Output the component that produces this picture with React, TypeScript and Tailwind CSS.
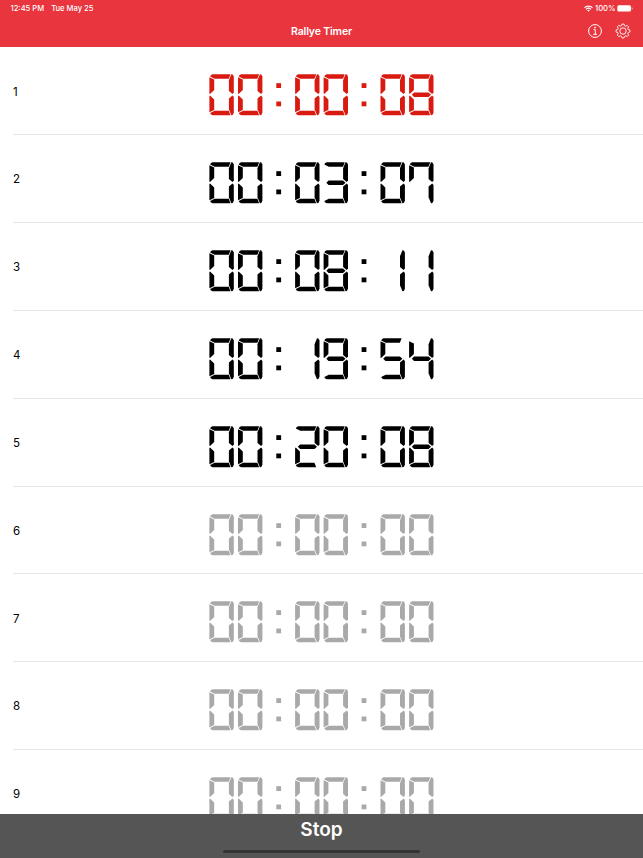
const SEGMENTS: Record<string, string> = {
  a: '0.9,2.4 1.8,0.9 3.4,0.2 21.3,0.2 19.6,4.7 5.4,4.7',
  b: '22.1,0.2 23.5,0.5 24.6,2.6 24.6,18.4 23.3,20 19.7,16.9 19.7,6.2',
  c: '23.3,21.4 24.6,23 24.6,38.8 23.5,41 22.1,41.3 19.7,35.3 19.7,24.6',
  d: '0.9,39.1 1.8,40.6 3.4,41.3 21.3,41.3 19.6,36.8 5.4,36.8',
  e: '0.2,21.8 1.1,21.8 5,25.6 5,36 0.2,38.2',
  f: '0.2,3.3 5,5.5 5,15.9 1.1,19.7 0.2,19.7',
  g: '2.9,20.75 5.2,18.6 19.6,18.6 22.1,20.75 19.6,22.9 5.2,22.9',
};

const DIGITS: Record<string, string> = {
  '0': 'abcdef',
  '1': 'bc',
  '2': 'abged',
  '3': 'abgcd',
  '4': 'fgbc',
  '5': 'afgcd',
  '7': 'fabc',
  '8': 'abcdefg',
  '9': 'abcdfg',
};

const OFFSETS = [0.2, 28.8, 85.9, 114.4, 171.3, 199.9];

const ROWS = [
  { time: '000008', color: 'text-[#d91a10]' },
  { time: '000307', color: 'text-black' },
  { time: '000811', color: 'text-black' },
  { time: '001954', color: 'text-black' },
  { time: '002008', color: 'text-black' },
  { time: '000000', color: 'text-[#a9a9a9]' },
  { time: '000000', color: 'text-[#a9a9a9]' },
  { time: '000000', color: 'text-[#a9a9a9]' },
  { time: '000000', color: 'text-[#a9a9a9]' },
];

function Clock({ time, color }: { time: string; color: string }) {
  return (
    <svg width="226" height="42" viewBox="0 0 226 42" fill="currentColor" className={`shrink-0 ${color}`}>
      {time.split('').map((digit, i) => (
        <g key={i} transform={`translate(${OFFSETS[i]} 0)`}>
          {DIGITS[digit].split('').map((s) => (
            <polygon key={s} points={SEGMENTS[s]} />
          ))}
        </g>
      ))}
      {[67.3, 152.6].map((x) => (
        <g key={x}>
          <rect x={x} y="9.2" width="4.8" height="4.8" />
          <rect x={x} y="27.5" width="4.8" height="4.8" />
        </g>
      ))}
    </svg>
  );
}

function gearPath() {
  const pts: string[] = [];
  const teeth = 8;
  for (let i = 0; i < teeth; i++) {
    const base = (i / teeth) * Math.PI * 2 - Math.PI / 2;
    for (const [da, r] of [[-0.27, 5.5], [-0.15, 7], [0.15, 7], [0.27, 5.5]]) {
      pts.push(`${(8 + r * Math.cos(base + da)).toFixed(2)} ${(8 + r * Math.sin(base + da)).toFixed(2)}`);
    }
  }
  return `M${pts.join('L')}Z`;
}

export default function App() {
  return (
    <div className="flex h-[858px] w-[643px] flex-col overflow-hidden bg-white font-['Inter','Liberation_Sans',sans-serif]">
      <header className="flex h-[46.5px] shrink-0 flex-col bg-[#e9353e] text-white">
        <div className="flex h-4 items-center justify-between pr-[10px] pl-[10.5px] text-[7.6px] leading-4 font-medium">
          <div className="flex gap-[7px] pt-[1px]">
            <span>12:45 PM</span>
            <span>Tue May 25</span>
          </div>
          <div className="flex items-center">
            <svg width="9" height="7" viewBox="0 0 9 7" fill="none" stroke="white" strokeWidth="1.2">
              <path d="M.5 2.7a5.7 5.7 0 0 1 8 0M2 4.4a3.6 3.6 0 0 1 5 0" />
              <path d="M3.2 5.3 4.5 6.7 5.8 5.3A2 2 0 0 0 3.2 5.3Z" fill="white" stroke="none" />
            </svg>
            <span className="ml-[2px] w-[21px] pt-[1px] text-[7.6px]">100%</span>
            <svg width="16" height="7" viewBox="0 0 16 7" className="ml-[1px]">
              <rect x="0.3" y="0.3" width="13.7" height="6.2" rx="1.6" fill="white" />
              <path d="M14.7 2.3Q15.7 2.7 15.7 3.4T14.7 4.5Z" fill="white" opacity=".7" />
            </svg>
          </div>
        </div>
        <div className="grid h-[30px] grid-cols-[1fr_auto_1fr] items-center">
          <span />
          <h1 className="pt-[2px] text-[10.5px] leading-none font-semibold tracking-[-0.15px]">Rallye Timer</h1>
          <div className="flex items-center justify-end gap-[12px] pr-[12px]">
            <svg width="16" height="16" viewBox="0 0 16 16" fill="none" stroke="white" strokeWidth="1">
              <circle cx="8" cy="8" r="6.4" />
              <path d="M6.5 6.7H8.3V11.3M6.3 11.3H10" />
              <circle cx="8" cy="4.6" r=".9" fill="white" stroke="none" />
            </svg>
            <svg width="16" height="16" viewBox="0 0 16 16" fill="none" stroke="white" strokeWidth=".9" strokeLinejoin="round">
              <path d={gearPath()} />
              <circle cx="8" cy="8" r="3.2" />
            </svg>
          </div>
        </div>
      </header>
      <main className="min-h-0 flex-1 overflow-hidden pt-[0.9px]">
        {ROWS.map((row, i) => (
          <div key={i} className="ml-[13px] flex h-[87.85px] items-center border-b border-[#e6e6e6] pt-[9px]">
            <span className="w-[196px] -translate-y-[3px] text-[11.5px] leading-none text-black">{i + 1}</span>
            <Clock {...row} />
          </div>
        ))}
      </main>
      <footer className="flex h-11 shrink-0 flex-col items-center bg-[#555555]">
        <button className="mt-[5px] h-[22px] text-[19px] leading-[22px] font-semibold text-white">Stop</button>
        <div className="mt-[8.5px] h-[3.5px] w-[197px] rounded-full bg-[#343434]" />
      </footer>
    </div>
  );
}
